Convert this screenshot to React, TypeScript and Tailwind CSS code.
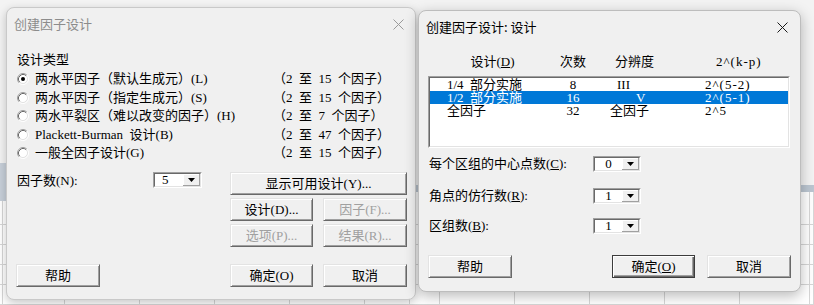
import React from "react";

const SERIF = "font-['Liberation_Serif','Noto_Sans_CJK_SC',serif]";
const SANS = "font-['Noto_Sans_CJK_SC',sans-serif]";

const leftCols = ["w-[3px]", "w-[62px]", "w-[75px]", "w-[75px]", "w-[75px]", "w-[75px]", "flex-1"];
const rightCols = ["w-[30px]", "w-[75px]", "w-[75px]", "w-[75px]", "w-[75px]", "w-[70px]", "flex-1"];
const leftRows = ["h-[24px]", "h-[20px]", "h-[20px]", "h-[20px]", "h-[20px]"];
const rightRows = ["h-[33px]", "h-[20px]", "h-[20px]", "h-[20px]", "h-[20px]"];

function SheetRows({ rows, cols }: { rows: string[]; cols: string[] }) {
  return (
    <div className="flex-1 bg-white">
      {rows.map((h, i) => (
        <div key={i} className={`flex ${h}`}>
          {cols.map((w, j) => (
            <div key={j} className={`${w} border-r border-b border-[#d6d6d6]`} />
          ))}
        </div>
      ))}
    </div>
  );
}

function CloseX({ dim }: { dim?: boolean }) {
  return (
    <svg width="11" height="11" viewBox="0 0 11 11">
      <path d="M0.5 0.5L10.5 10.5M10.5 0.5L0.5 10.5" stroke={dim ? "#9a9a9a" : "#1a1a1a"} strokeWidth="1" />
    </svg>
  );
}

function Radio({ checked }: { checked?: boolean }) {
  return (
    <svg width="12" height="12" viewBox="0 0 12 12" className="shrink-0">
      <circle cx="6" cy="6" r="4.5" fill="#fff" />
      <path d="M2.11 9.89A5.5 5.5 0 0 1 9.89 2.11" fill="none" stroke="#a0a0a0" />
      <path d="M2.82 9.18A4.5 4.5 0 0 1 9.18 2.82" fill="none" stroke="#696969" />
      <path d="M9.89 2.11A5.5 5.5 0 0 1 2.11 9.89" fill="none" stroke="#fff" />
      <path d="M9.18 2.82A4.5 4.5 0 0 1 2.82 9.18" fill="none" stroke="#e3e3e3" />
      {checked && <circle cx="6" cy="6" r="2" fill="#000" />}
    </svg>
  );
}

function Btn({
  children,
  className = "",
  disabled,
  focus,
}: {
  children: React.ReactNode;
  className?: string;
  disabled?: boolean;
  focus?: boolean;
}) {
  const edge = focus
    ? "border border-[#3c3c3c] shadow-[inset_1px_1px_0_#fff,inset_-1px_-1px_0_#696969,inset_-2px_-2px_0_#a0a0a0]"
    : "border border-t-[#e3e3e3] border-l-[#e3e3e3] border-r-[#696969] border-b-[#696969] shadow-[inset_1px_1px_0_#fff,inset_-1px_-1px_0_#a0a0a0]";
  return (
    <div
      className={`h-[23px] flex items-center justify-center bg-[#f0f0f0] text-[13px] leading-[16px] ${edge} ${
        disabled ? "text-[#a0a0a0]" : "text-black"
      } ${className}`}
    >
      {children}
    </div>
  );
}

function Sunken({ className = "", children }: { className?: string; children?: React.ReactNode }) {
  return (
    <div className={`border border-t-[#a0a0a0] border-l-[#a0a0a0] border-r-white border-b-white ${className}`}>
      <div className="h-full border border-t-[#696969] border-l-[#696969] border-r-[#e3e3e3] border-b-[#e3e3e3] bg-white overflow-hidden">
        {children}
      </div>
    </div>
  );
}

function Combo({ value, className = "", textClass = "" }: { value: string; className?: string; textClass?: string }) {
  return (
    <Sunken className={`h-[16px] ${className}`}>
      <div className="flex h-full">
        <div className={`flex-1 text-[13px] leading-[12px] ${textClass}`}>{value}</div>
        <div className="w-[17px] h-full flex items-center justify-center bg-[#f0f0f0] shadow-[inset_-1px_-1px_0_#a0a0a0,inset_1px_1px_0_#fff]">
          <svg width="7" height="4" viewBox="0 0 7 4">
            <path d="M0 0H7L3.5 4Z" fill="#000" />
          </svg>
        </div>
      </div>
    </Sunken>
  );
}

const designTypes = [
  { label: "两水平因子（默认生成元）(L)", range: "（2\u2002至\u200215\u2002个因子）", checked: true },
  { label: "两水平因子（指定生成元）(S)", range: "（2\u2002至\u200215\u2002个因子）" },
  { label: "两水平裂区（难以改变的因子）(H)", range: "（2\u2002至\u20027\u2002个因子）" },
  { label: "Plackett-Burman\u2002设计(B)", range: "（2\u2002至\u200247\u2002个因子）" },
  { label: "一般全因子设计(G)", range: "（2\u2002至\u200215\u2002个因子）" },
];

const designs = [
  { name: "1/4\u2002部分实施", runs: "8", res: "III", resPad: "pl-[26px]", kp: "2^(5-2)" },
  { name: "1/2\u2002部分实施", runs: "16", res: "V", resPad: "pl-[45px]", kp: "2^(5-1)", selected: true },
  { name: "全因子", runs: "32", res: "全因子", resPad: "pl-[19px]", kp: "2^5" },
];

function LeftDialog() {
  return (
    <div className="absolute left-[6px] top-[7px] w-[410px] h-[293px] rounded-[8px] border border-[#c9c9c9] bg-[#f0f0f0] shadow-[0_3px_10px_rgba(0,0,0,0.22)] flex flex-col">
      <div className="h-[32px] flex items-center justify-between pl-[7px] pr-[11px]">
        <span className={`text-[13px] text-[#8c8c8c] ${SANS}`}>创建因子设计</span>
        <CloseX dim />
      </div>
      <div className={`flex flex-col pl-[10px] text-[13px] text-black ${SERIF}`}>
        <div className="mt-[11px] h-[18px] leading-[18px]">设计类型</div>
        <div className="mt-[1px] flex flex-col">
          {designTypes.map((d) => (
            <div key={d.label} className="grid grid-cols-[256px_1fr] h-[18.5px] items-center leading-[18px]">
              <div className="flex items-center gap-[6px]">
                <Radio checked={d.checked} />
                <span>{d.label}</span>
              </div>
              <span>{d.range}</span>
            </div>
          ))}
        </div>

        <div className="flex items-start h-[23px] mt-[9.5px]">
          <div className="w-[136px] leading-[18px]">因子数(N):</div>
          <Combo value="5" className="w-[49px]" textClass="pl-[7px]" />
          <Btn className="ml-[28px] w-[177px]">显示可用设计(Y)...</Btn>
        </div>
        <div className="flex gap-[10px] ml-[213px] mt-[3px]">
          <Btn className="w-[83px]">设计(D)...</Btn>
          <Btn className="w-[84px]" disabled>因子(F)...</Btn>
        </div>
        <div className="flex gap-[10px] ml-[213px] mt-[3px]">
          <Btn className="w-[83px]" disabled>选项(P)...</Btn>
          <Btn className="w-[84px]" disabled>结果(R)...</Btn>
        </div>
        <div className="flex ml-[-1px] mt-[17px]">
          <Btn className="w-[84px]">帮助</Btn>
          <Btn className="ml-[130px] w-[83px]">确定(O)</Btn>
          <Btn className="ml-[10px] w-[84px]">取消</Btn>
        </div>
      </div>
    </div>
  );
}

function RightDialog() {
  return (
    <div className="absolute left-[418px] top-[10px] w-[383px] h-[282px] rounded-[8px] border border-[#bdbdbd] bg-[#f0f0f0] shadow-[0_4px_14px_rgba(0,0,0,0.28)] flex flex-col">
      <div className="h-[32px] flex items-center justify-between pl-[7px] pr-[12px]">
        <span className={`text-[13px] text-black ${SANS}`}>创建因子设计: 设计</span>
        <CloseX />
      </div>
      <div className={`flex flex-col pl-[9px] text-[13px] text-black ${SERIF}`}>
        <div className="mt-[10px] ml-[2px] flex h-[18px] leading-[18px]">
          <div className="w-[125px] text-center">
            设计(<span className="underline">D</span>)
          </div>
          <div className="w-[36px] text-center">次数</div>
          <div className="w-[114px] pl-[24px]">分辨度</div>
          <div className="pl-[11px] tracking-[1px]">2^(k-p)</div>
        </div>

        <Sunken className="mt-[5px] w-[362px] h-[72px]">
          {designs.map((d) => (
            <div
              key={d.name}
              className={`flex h-[13px] leading-[13px] whitespace-pre ${
                d.selected ? "bg-[#0078d7] text-white" : "text-black"
              }`}
            >
              <div className="w-[125px] pl-[17px]">{d.name}</div>
              <div className="w-[36px] text-center">{d.runs}</div>
              <div className={`w-[114px] ${d.resPad}`}>{d.res}</div>
              <div className="tracking-[1px]">{d.kp}</div>
            </div>
          ))}
        </Sunken>

        <div className="flex items-center h-[16px] mt-[8px]">
          <div className="w-[165px] pl-[1px] leading-[16px]">
            每个区组的中心点数(<span className="underline">C</span>):
          </div>
          <Combo value="0" className="w-[48px]" textClass="text-center" />
        </div>
        <div className="flex items-center h-[16px] mt-[16px]">
          <div className="w-[165px] pl-[1px] leading-[16px]">
            角点的仿行数(<span className="underline">R</span>):
          </div>
          <Combo value="1" className="w-[48px]" textClass="text-center" />
        </div>
        <div className="flex items-center h-[16px] mt-[14px]">
          <div className="w-[165px] pl-[1px] leading-[16px]">
            区组数(<span className="underline">B</span>):
          </div>
          <Combo value="1" className="w-[48px]" textClass="text-center" />
        </div>

        <div className="flex mt-[21px]">
          <Btn className="w-[84px]">帮助</Btn>
          <Btn className="ml-[100px] w-[83px]" focus>
            确定(<span className="underline">O</span>)
          </Btn>
          <Btn className="ml-[12px] w-[84px]">取消</Btn>
        </div>
      </div>
    </div>
  );
}

export default function App() {
  return (
    <div className="relative w-[814px] h-[305px] overflow-hidden flex bg-[#f5f5f5]">
      {/* worksheet behind the dialogs */}
      <div className="w-[410px] flex flex-col">
        <div className="h-[165px] bg-[#f3f3f3]" />
        <div className="h-[38px] bg-[#c7cfd9]" />
        <SheetRows rows={leftRows} cols={leftCols} />
      </div>
      <div className="flex-1 flex flex-col">
        <div className="h-[188px] bg-[#f3f3f3]" />
        <div className="h-[7px] bg-[#bcc6d1]" />
        <SheetRows rows={rightRows} cols={rightCols} />
      </div>

      <LeftDialog />
      <RightDialog />
    </div>
  );
}
